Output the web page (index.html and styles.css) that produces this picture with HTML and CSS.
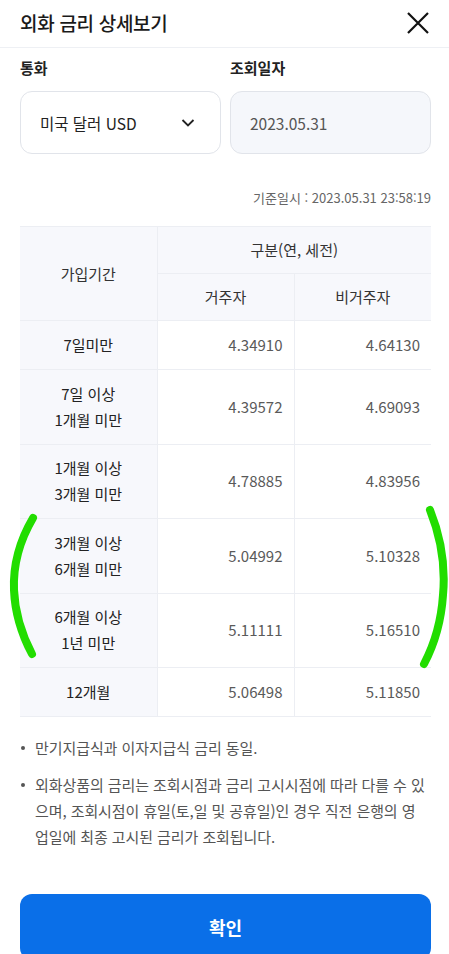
FILE: index.html
```html
<!DOCTYPE html>
<html lang="ko">
<head>
<meta charset="utf-8">
<link rel="stylesheet" href="styles.css">
</head>
<body>
<div class="page">
  <header class="top">
    <h1 class="title">외화 금리 상세보기</h1>
    <svg class="close" width="24" height="24" viewBox="0 0 24 24"><path d="M2 2L22 22M22 2L2 22" stroke="#111" stroke-width="2.2" fill="none"/></svg>
  </header>
  <section class="filters">
    <div class="field">
      <div class="label">통화</div>
      <div class="box select"><span>미국 달러 USD</span>
        <svg width="14" height="10" viewBox="0 0 14 10"><path d="M1.5 2L7 7.5L12.5 2" stroke="#222" stroke-width="1.8" fill="none"/></svg>
      </div>
    </div>
    <div class="field">
      <div class="label">조회일자</div>
      <div class="box date">2023.05.31</div>
    </div>
  </section>
  <div class="basis">기준일시 : 2023.05.31 23:58:19</div>
  <table class="rates">
    <thead>
      <tr><th rowspan="2" class="first">가입기간</th><th colspan="2">구분(연, 세전)</th></tr>
      <tr><th>거주자</th><th>비거주자</th></tr>
    </thead>
    <tbody>
      <tr class="short"><th>7일미만</th><td>4.34910</td><td>4.64130</td></tr>
      <tr><th>7일 이상<br>1개월 미만</th><td>4.39572</td><td>4.69093</td></tr>
      <tr><th>1개월 이상<br>3개월 미만</th><td>4.78885</td><td>4.83956</td></tr>
      <tr><th>3개월 이상<br>6개월 미만</th><td>5.04992</td><td>5.10328</td></tr>
      <tr><th>6개월 이상<br>1년 미만</th><td>5.11111</td><td>5.16510</td></tr>
      <tr class="short"><th>12개월</th><td>5.06498</td><td>5.11850</td></tr>
    </tbody>
  </table>
  <ul class="notes">
    <li>만기지급식과 이자지급식 금리 동일.</li>
    <li>외화상품의 금리는 조회시점과 금리 고시시점에 따라 다를 수 있으며, 조회시점이 휴일(토,일 및 공휴일)인 경우 직전 은행의 영<br>업일에 최종 고시된 금리가 조회됩니다.</li>
  </ul>
  <button class="confirm">확인</button>
  <svg class="mark" width="449" height="954" viewBox="0 0 449 954">
    <path d="M33 518C20 540 13 565 14 590C15 615 22 635 32 654" stroke="#22dd00" stroke-width="8" stroke-linecap="round" fill="none"/>
    <path d="M430 510C440 535 446 562 443 595C441 625 434 645 424 664" stroke="#22dd00" stroke-width="8" stroke-linecap="round" fill="none"/>
  </svg>
</div>
</body>
</html>
```
FILE: styles.css
```css
* { box-sizing: border-box; }
html, body { margin: 0; padding: 0; background: #fff; }
body { font-family: "Noto Sans CJK KR", "Noto Sans", sans-serif; color: #222; }
.page { position: relative; width: 449px; height: 954px; overflow: hidden; }
.top { height: 48px; display: flex; align-items: center; justify-content: space-between; padding: 0 19px 2px 20px; border-bottom: 1px solid #eef0f4; }
.title { margin: 0; font-size: 19px; font-weight: 500; letter-spacing: -0.3px; color: #1a1a1a; }
.close { display: block; }
.filters { display: flex; gap: 9px; padding: 9px 18px 0 20px; }
.field { flex: 1; }
.label { font-size: 15px; font-weight: 700; line-height: 22px; margin-bottom: 12px; color: #222; }
.box { height: 63px; border: 1px solid #e1e4ea; border-radius: 12px; display: flex; align-items: center; font-size: 15.5px; }
.select { justify-content: space-between; padding: 0 25px 0 19px; color: #222; }
.date { background: #f5f7fb; padding: 0 19px; color: #555; }
.basis { text-align: right; font-size: 13px; color: #666; padding: 34px 18px 0 0; line-height: 20px; }
.rates { margin: 18px 18px 0 20px; width: 411px; border-collapse: collapse; border-top: 1.5px solid #8a8d93; table-layout: fixed; }
.rates th, .rates td { border: 1px solid #eceef3; font-weight: 400; font-size: 15px; line-height: 26px; padding-top: 0; padding-bottom: 0; }
.rates tr > :first-child { border-left: none; }
.rates tr > :last-child { border-right: none; }
.rates thead th { background: #f7f8fc; height: 47px; color: #333; }
.rates thead th.first { width: 137px; }
.rates tbody th { background: #f7f8fc; height: 74.5px; color: #222; }
.rates tbody tr.short th { height: 49px; }
.rates td { text-align: right; padding-right: 11px; color: #5a5a5a; }
.rates tbody tr:last-child > * { border-bottom: 1px solid #eceef3; }
.notes { list-style: none; margin: 18px 17px 0 20px; padding: 0; font-size: 15px; line-height: 26px; color: #555; letter-spacing: -0.08px; word-break: break-all; }
.notes li { position: relative; padding-left: 15px; margin-bottom: 11px; }
.notes li::before { content: ""; position: absolute; left: 1px; top: 11px; width: 4px; height: 4px; border-radius: 50%; background: #555; }
.confirm { display: block; margin: 44px 18px 0 20px; width: 411px; height: 66px; border: none; border-radius: 12px; background: #0a6fe8; color: #fff; font-family: inherit; font-size: 18px; font-weight: 700; }
.mark { position: absolute; left: 0; top: 0; pointer-events: none; }
```
